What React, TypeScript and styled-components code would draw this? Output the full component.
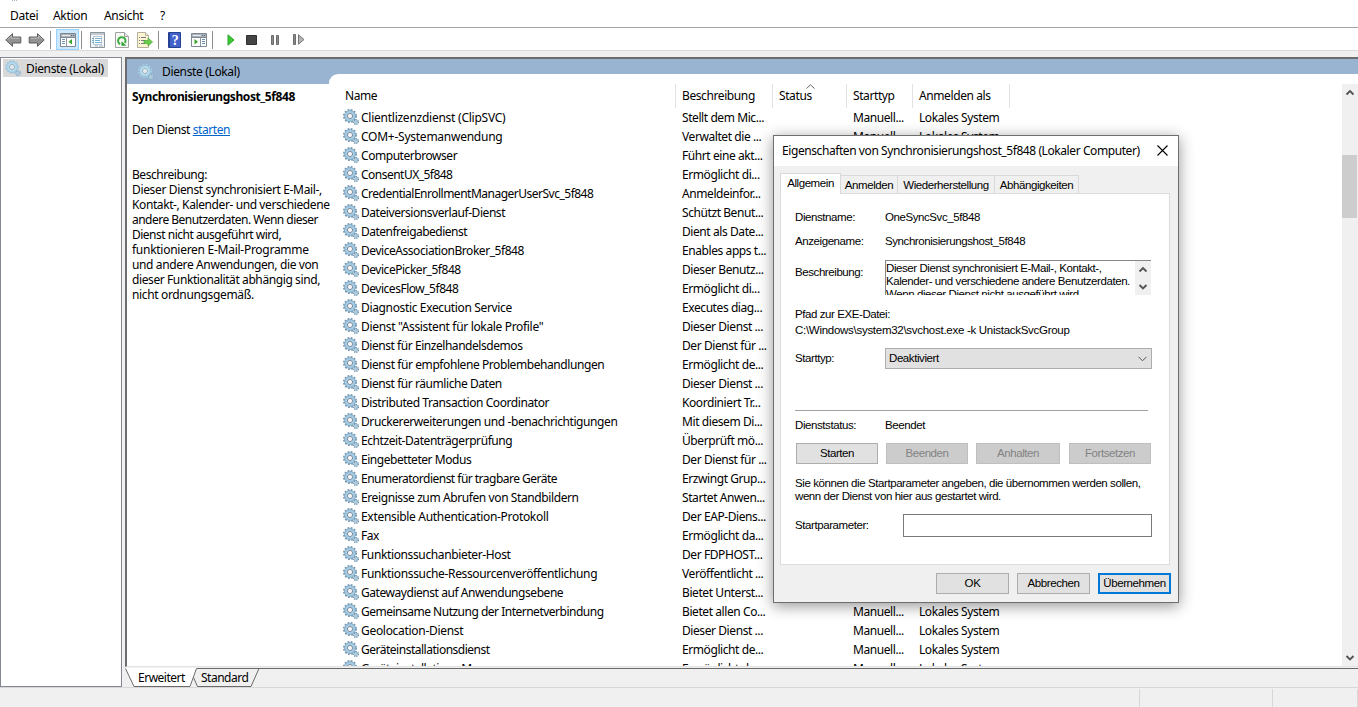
import React from "react";
import styled, { createGlobalStyle, css } from "styled-components";

const Global = createGlobalStyle`
  html, body { margin: 0; padding: 0; }
  body {
    width: 1358px; height: 707px; overflow: hidden; background: #f0f0f0; color: #000;
    font: 12px/15px "Noto Sans", "Open Sans", sans-serif;
  }
  *, *::before, *::after { box-sizing: border-box; }
  button, input { font: inherit; color: inherit; margin: 0; padding: 0; border-radius: 0; outline: 0; }
`;

const Window = styled.div`
  position: relative; width: 1358px; height: 707px; overflow: hidden;
  display: flex; flex-direction: column; background: #f0f0f0; white-space: nowrap;
  letter-spacing: -0.3px;
`;
const Text = styled.span<{ $track: number }>`letter-spacing: ${(p) => p.$track}px;`;
const MenuBar = styled.nav`
  flex: none; height: 28px; padding: 8px 0 0 10px; display: flex; gap: 16px;
  background: #fff; border-bottom: 1px solid #a5a5a8;
`;
const MenuItem = styled.span<{ $w: number }>`width: ${(p) => p.$w}px;`;
const TitleRemnant = styled.svg`position: absolute; left: 12px; top: 0;`;

const ToolBar = styled.div`
  flex: none; height: 23px; padding: 1px 0 0 5px; display: flex; align-items: center;
  background: #fff; border-bottom: 1px solid #dadada;
  svg { display: block; flex: none; }
`;
const Tool = styled.span<{ $ml?: number; $active?: boolean }>`
  flex: none; display: flex; align-items: center; justify-content: center;
  width: ${(p) => (p.$active ? 23 : 17)}px; height: 21px; margin-left: ${(p) => p.$ml ?? 0}px;
  ${(p) => p.$active && css`background: #cce8ff; border: 1px solid #99d1ff;`}
`;
const Rule = styled.i<{ $ml: number }>`
  flex: none; width: 1px; height: 18px; margin-left: ${(p) => p.$ml}px; background: #8d8d8d;
`;

const Body = styled.div`flex: none; height: 636px; display: flex; padding-top: 6px;`;
const Tree = styled.aside`
  flex: none; width: 122px; height: 630px; padding: 1px 2px; background: #fff; border: 1px solid #828790;
`;
const TreeItem = styled.div`
  width: 105px; height: 18px; display: flex; align-items: center; gap: 5px; padding-left: 2px; background: #d9d9d9;
  letter-spacing: -0.35px;
  svg { flex: none; }
`;
const Content = styled.main`flex: 1; margin-left: 3px; display: flex; flex-direction: column;`;
const Pane = styled.section`
  flex: none; height: 610px; display: flex; flex-direction: column; background: #fff;
  border-left: 2px solid #6c6c70; border-top: 2px solid #6c6c6c; border-bottom: 1px solid #e3e3e3;
`;
const Split = styled.div`flex: 1; min-height: 0; display: flex; background: #99b4d1;`;
const Side = styled.div`position: relative; z-index: 1; flex: none; width: 202px; display: flex; flex-direction: column;`;
const SideHead = styled.div`
  height: 25px; display: flex; align-items: center; gap: 8px; padding-left: 11px; letter-spacing: -0.35px;
`;
const SideBody = styled.div`
  flex: 1; padding: 5px 0 0 5px; background: #fff;
`;
const Heading = styled.h1`margin: 0 0 18px; font-size: 12px; line-height: 15px; font-weight: 700; letter-spacing: -0.42px;`;
const ServiceAction = styled.p`margin: 0 0 30px; letter-spacing: -0.42px;`;
const Link = styled.a`color: #0066cc; text-decoration: underline;`;
const Description = styled.div`display: flex; flex-direction: column;`;

const ListArea = styled.div`
  flex: 1; margin-top: 15px; padding-top: 10px; display: flex; background: #fff; border-top-left-radius: 9px; overflow: hidden;
`;
const Table = styled.div`flex: 1; overflow: hidden;`;
const columns = css`display: grid; grid-template-columns: 347px 97px 74px 66px 97px;`;
const HeadRow = styled.div`${columns} height: 24px;`;
const HeadCell = styled.div<{ $pl: number }>`
  position: relative; padding: 4px 0 0 ${(p) => p.$pl}px; border-right: 1px solid #e3e3e3; letter-spacing: -0.4px;
`;
const SortMark = styled.svg`position: absolute; left: 33px; top: 0;`;
const Row = styled.div`${columns} height: 19px;`;
const Cell = styled.div`padding: 2px 0 0 6px; overflow: hidden; letter-spacing: -0.42px;`;
const NameCell = styled.div`
  display: flex; gap: 2px; padding-left: 14px;
  svg { flex: none; margin-top: 1px; }
  span { padding-top: 2px; }
`;

const Scroll = styled.div`
  flex: none; width: 16px; display: flex; flex-direction: column; align-items: center; background: #f0f0f0;
`;
const ScrollStep = styled.svg`display: block;`;
const Track = styled.div`flex: 1; width: 16px; padding-top: 54px;`;
const Thumb = styled.div`width: 15px; height: 63px; background: #cdcdcd;`;

const ViewTabs = styled.div`height: 19px; margin-top: 1px; svg { display: block; }`;
const Status = styled.footer`
  flex: 1; display: grid; grid-template-columns: 1140px 133px 85px; padding-top: 1px; border-top: 1px solid #d7d7d7;
  i { border-right: 1px solid #d7d7d7; }
`;

const Dialog = styled.div`
  position: absolute; z-index: 2; left: 773px; top: 135px; width: 406px; height: 468px; display: flex; flex-direction: column;
  background: #f0f0f0; border: 1px solid #6e6e6e; box-shadow: 0 3px 14px rgba(0, 0, 0, 0.42);
`;
const DialogTitle = styled.div`
  flex: none; height: 30px; display: flex; justify-content: space-between; align-items: center;
  padding: 0 10px 2px 8px; background: #fff; letter-spacing: -0.42px;
`;
const DialogBody = styled.div`
  flex: 1; padding: 7px 7px 8px 6px; display: flex; flex-direction: column;
  font: 11.5px/13px "Liberation Sans", Arial, sans-serif; letter-spacing: -0.42px;
`;
const Tabs = styled.div`position: relative; height: 20px; display: flex; align-items: flex-end;`;
const Tab = styled.div<{ $w: number; $active?: boolean }>`
  width: ${(p) => p.$w}px; height: ${(p) => (p.$active ? 21 : 18)}px; text-align: center;
  padding-top: ${(p) => (p.$active ? 3 : 3)}px; background: ${(p) => (p.$active ? "#fff" : "#f0f0f0")};
  border: 1px solid #d9d9d9; border-bottom: 0; ${(p) => !p.$active && "border-left: 0;"}
  ${(p) => p.$active && "margin-bottom: -1px; z-index: 1;"}
`;
const Sheet = styled.div`
  width: 390px; height: 372px; padding: 17px 17px 0 14px; background: #fff; border: 1px solid #dcdcdc;
  display: flex; flex-direction: column;
`;
const Field = styled.div<{ $h: number; $label?: number }>`
  flex: none; height: ${(p) => p.$h}px; display: grid; grid-template-columns: ${(p) => p.$label ?? 90}px 1fr;
`;
const Label = styled.span<{ $top?: number }>`padding-top: ${(p) => p.$top ?? 0}px;`;
const Memo = styled.div`
  width: 266px; height: 35px; display: flex; overflow: hidden; border-top: 1px solid #868686; border-left: 1px solid #868686;
`;
const MemoText = styled.div`flex: 1; min-width: 0; padding-top: 1px;`;
const MemoScroll = styled.div`
  flex: none; width: 16px; height: 34px; display: flex; flex-direction: column; background: #f0f0f0;
`;
const Path = styled.div`flex: none; height: 41px; margin-top: -1px; margin-bottom: 1px; line-height: 16px;`;
const Select = styled.div`
  width: 267px; height: 21px; display: flex; align-items: center; justify-content: space-between;
  padding: 0 4px 0 3px; background: #e1e1e1; border: 1px solid #adadad;
`;
const Line = styled.div`flex: none; width: 353px; height: 1px; background: #a0a0a0;`;
const Controls = styled.div`
  flex: none; display: grid; grid-template-columns: 82px 82px 84px 82px; column-gap: 8px; margin: 0 0 13px 1px;
  & > :last-child { margin-left: 1px; margin-right: -1px; }
`;
const Button = styled.button<{ $primary?: boolean }>`
  height: 21px; line-height: 19px; letter-spacing: inherit; background: #e1e1e1; border: 1px solid #adadad;
  ${(p) => p.$primary && css`border: 2px solid #0078d7; line-height: 17px;`}
  &:disabled { background: #cccccc; border-color: #bfbfbf; color: #838383; }
`;
const Note = styled.p`flex: none; margin: 0; height: 37px;`;
const Input = styled.input`width: 249px; height: 23px; background: #fff; border: 1px solid #7a7a7a;`;
const Footer = styled.div`
  margin-top: 8px; display: grid; grid-template-columns: repeat(3, 73px); gap: 8px; justify-content: end;
`;

/* name, description, letter spacing of the name */
const services: [string, string, number][] = [
  ["Clientlizenzdienst (ClipSVC)", "Stellt dem Mic...", -0.25],
  ["COM+-Systemanwendung", "Verwaltet die ...", -0.25],
  ["Computerbrowser", "Führt eine akt...", -0.45],
  ["ConsentUX_5f848", "Ermöglicht di...", -0.52],
  ["CredentialEnrollmentManagerUserSvc_5f848", "Anmeldeinfor...", -0.5],
  ["Dateiversionsverlauf-Dienst", "Schützt Benut...", -0.44],
  ["Datenfreigabedienst", "Dient als Date...", -0.51],
  ["DeviceAssociationBroker_5f848", "Enables apps t...", -0.45],
  ["DevicePicker_5f848", "Dieser Benutz...", -0.47],
  ["DevicesFlow_5f848", "Ermöglicht di...", -0.48],
  ["Diagnostic Execution Service", "Executes diag...", -0.35],
  ['Dienst "Assistent für lokale Profile"', "Dieser Dienst ...", -0.33],
  ["Dienst für Einzelhandelsdemos", "Der Dienst für ...", -0.45],
  ["Dienst für empfohlene Problembehandlungen", "Ermöglicht de...", -0.42],
  ["Dienst für räumliche Daten", "Dieser Dienst ...", -0.44],
  ["Distributed Transaction Coordinator", "Koordiniert Tr...", -0.42],
  ["Druckererweiterungen und -benachrichtigungen", "Mit diesem Di...", -0.41],
  ["Echtzeit-Datenträgerprüfung", "Überprüft mö...", -0.43],
  ["Eingebetteter Modus", "Der Dienst für ...", -0.45],
  ["Enumeratordienst für tragbare Geräte", "Erzwingt Grup...", -0.52],
  ["Ereignisse zum Abrufen von Standbildern", "Startet Anwen...", -0.4],
  ["Extensible Authentication-Protokoll", "Der EAP-Diens...", -0.31],
  ["Fax", "Ermöglicht da...", -0.5],
  ["Funktionssuchanbieter-Host", "Der FDPHOST...", -0.37],
  ["Funktionssuche-Ressourcenveröffentlichung", "Veröffentlicht ...", -0.35],
  ["Gatewaydienst auf Anwendungsebene", "Bietet Unterst...", -0.45],
  ["Gemeinsame Nutzung der Internetverbindung", "Bietet allen Co...", -0.5],
  ["Geolocation-Dienst", "Dieser Dienst ...", -0.3],
  ["Geräteinstallationsdienst", "Ermöglicht de...", -0.49],
  ["Geräteinstallations-Manager", "Ermöglicht de...", -0.49],
];

const description: [string, number][] = [
  ["Beschreibung:", -0.45],
  ["Dieser Dienst synchronisiert E-Mail-,", -0.35],
  ["Kontakt-, Kalender- und verschiedene", -0.4],
  ["andere Benutzerdaten. Wenn dieser", -0.52],
  ["Dienst nicht ausgeführt wird,", -0.5],
  ["funktionieren E-Mail-Programme", -0.27],
  ["und andere Anwendungen, die von", -0.38],
  ["dieser Funktionalität abhängig sind,", -0.4],
  ["nicht ordnungsgemäß.", -0.35],
];

const Gears = ({ pale }: { pale?: boolean }) => (
  <svg width="16" height="16" viewBox="0 0 16 16">
    <circle cx="7" cy="7" r="6.1" fill="none" stroke={pale ? "#a9cfe4" : "#6f93ad"} strokeWidth="1.8" strokeDasharray="1.7 1.5" />
    <circle cx="7" cy="7" r="4.3" fill="#f4f8fb" stroke={pale ? "#b4daee" : "#a3cbe4"} strokeWidth="2.8" />
    <circle cx="7" cy="7" r="5.5" fill="none" stroke={pale ? "#8bb4cd" : "#7396b2"} strokeWidth="0.6" />
    <circle cx="7" cy="7" r="2.6" fill={pale ? "#e4e9ee" : "#f7f7f7"} stroke={pale ? "#8fa9bb" : "#6b7f94"} strokeWidth="0.9" />
    <circle cx="13" cy="13" r="2.4" fill="#b7d5e8" stroke={pale ? "#86acc6" : "#6f93ad"} strokeWidth="1.3" strokeDasharray="1.1 0.9" />
    <circle cx="13" cy="13" r="1" fill="#eef5fa" stroke="#7c9db5" strokeWidth="0.5" />
  </svg>
);

const Arrow = ({ right }: { right?: boolean }) => (
  <svg width="17" height="16" viewBox="0 0 17 16">
    <path
      transform={right ? "matrix(-1 0 0 1 17 0)" : undefined}
      d="M.8 8 7.5 1.7V5h8.300v6H7.500v3.300Z" fill="#929292" stroke="#5d5d5d"
    />
    <path transform={right ? "matrix(-1 0 0 1 17 0)" : undefined} d="M2.500 7.500 6.500 4v2.200h8" fill="none" stroke="#bcbcbc" />
  </svg>
);

const WindowIcon = ({ flip }: { flip?: boolean }) => (
  <svg width="16" height="14" viewBox="0 0 16 14">
    <path d="M.5.5h15v13H.5z" fill="#fff" stroke="#7f8790" />
    <path d="M1 1h14v3H1z" fill="#a9b0b8" />
    <path d="M2 2.5h8" stroke="#e9ecef" />
    <path d="M11 2.5h1m1 0h1" stroke="#5d6670" />
    <path d="M1 4.5h14" stroke="#7f8790" />
    {flip ? (
      <>
        <path d="M9.5 5v8" stroke="#8d959d" />
        <path d="M11 6.5h3M11 8.5h3M11 10.5h3" stroke="#6c92b8" />
        <path d="M3.5 6v5.5L7 8.8Z" fill="#35a52b" />
      </>
    ) : (
      <>
        <path d="M6.5 5v8" stroke="#8d959d" />
        <path d="M2 6.5h3M2 8.5h3M2 10.5h3" stroke="#6c92b8" />
        <path d="M12 6v5.5L8.5 8.8Z" fill="#35a52b" />
      </>
    )}
  </svg>
);

const PropertiesIcon = () => (
  <svg width="15" height="16" viewBox="0 0 15 16">
    <path d="M.5.5h14v15H.5z" fill="#f5f7f9" stroke="#8c949c" />
    <path d="M1 1h13v2H1z" fill="#c4cbd2" />
    <path d="M3.500 4.500h8v8h-8z" fill="#fff" stroke="#b4c7d6" />
    <path d="M2 6.500h2m1 0h6M2 8.500h2m1 0h5M2 10.500h2m1 0h6" stroke="#6fb0d6" />
    <path d="M5 14h3m1 0h4" stroke="#a5b0ba" />
  </svg>
);
const RefreshIcon = () => (
  <svg width="14" height="16" viewBox="0 0 14 16">
    <path d="M.5.5h9l4 4v11H.5z" fill="#f8f8f5" stroke="#a2a2a2" />
    <path d="M9.5.5v4h4" fill="#e5e5e5" stroke="#a2a2a2" />
    <path d="M5.200 12.200A3.700 3.700 0 1 1 9.800 11" fill="none" stroke="#3fae41" strokeWidth="2" />
    <path d="M6.500 9.200v4.600h4.800Z" fill="#2b9f31" />
  </svg>
);
const ExportIcon = () => (
  <svg width="16" height="16" viewBox="0 0 16 16">
    <path d="M.5.5h8l3 3v12H.5z" fill="#fcf4d2" stroke="#b5b09a" />
    <path d="M8.500.500v3h3" fill="#eee" stroke="#b5b09a" />
    <path d="M2 5.500h1m1 0h5M2 8.500h1m1 0h4M2 11.500h1m1 0h4" stroke="#777c88" />
    <path d="M7 8.500h4V6l4.500 4-4.500 4v-2.500H7Z" fill="#6ccb4c" stroke="#48a836" strokeWidth=".7" />
  </svg>
);
const HelpIcon = () => (
  <svg width="13" height="16" viewBox="0 0 13 16">
    <path d="M.5.5h12v15H.5z" fill="#4262cb" stroke="#26418f" />
    <path d="M1.500 1v14" stroke="#253f99" />
    <text x="7" y="13" fontFamily="Liberation Serif, serif" fontWeight="700" fontSize="14" fill="#fff" textAnchor="middle">?</text>
  </svg>
);
const Chevron = ({ down, top = 7 }: { down?: boolean; top?: number }) => (
  <ScrollStep width="16" height="17" viewBox="0 0 16 17">
    <path d={down ? `M4.500 ${top}l3.500 3.500 3.500-3.500` : `M4.500 ${top + 3.5}l3.500-3.500 3.500 3.500`} fill="none" stroke="#555" strokeWidth="1.900" />
  </ScrollStep>
);

export default function App() {
  return (
    <>
      <Global />
      <Window>
        <MenuBar>
          <MenuItem $w={27}>Datei</MenuItem>
          <MenuItem $w={35}>Aktion</MenuItem>
          <MenuItem $w={40}>Ansicht</MenuItem>
          <MenuItem $w={8}>?</MenuItem>
        </MenuBar>
        <TitleRemnant width="6" height="1"><path d="M0 .5h5" stroke="#9bb3c4" strokeDasharray="1 1" /></TitleRemnant>
        <ToolBar>
          <Tool><Arrow /></Tool>
          <Tool $ml={6}><Arrow right /></Tool>
          <Rule $ml={5} />
          <Tool $active $ml={5}><WindowIcon /></Tool>
          <Rule $ml={2} />
          <Tool $ml={7}><PropertiesIcon /></Tool>
          <Tool $ml={7}><RefreshIcon /></Tool>
          <Tool $ml={6}><ExportIcon /></Tool>
          <Rule $ml={5} />
          <Tool $ml={7}><HelpIcon /></Tool>
          <Tool $ml={7}><WindowIcon flip /></Tool>
          <Rule $ml={5} />
          <Tool $ml={9}>
            <svg width="8" height="12"><path d="M1 .8v10.400L7 6Z" fill="#3bc936" stroke="#27a62a" /></svg>
          </Tool>
          <Tool $ml={4}>
            <svg width="11" height="10"><path d="M.5.500h10v9h-10z" fill="#454545" stroke="#303030" /></svg>
          </Tool>
          <Tool $ml={6}>
            <svg width="8" height="10"><path d="M.5.500h2v9h-2zM5.500.500h2v9h-2z" fill="#8c8c8c" stroke="#6d6d6d" /></svg>
          </Tool>
          <Tool $ml={7}>
            <svg width="12" height="11"><path d="M.5.500h2v10h-2z" fill="#8c8c8c" stroke="#6d6d6d" /><path d="M5.500.800v9.400l5.500-4.700Z" fill="#b5b5b5" stroke="#777" /></svg>
          </Tool>
        </ToolBar>
        <Body>
          <Tree>
            <TreeItem><Gears pale />Dienste (Lokal)</TreeItem>
          </Tree>
          <Content>
            <Pane>
              <Split>
                <Side>
                  <SideHead><Gears pale />Dienste (Lokal)</SideHead>
                  <SideBody>
                    <Heading>Synchronisierungshost_5f848</Heading>
                    <ServiceAction>Den Dienst <Link>starten</Link></ServiceAction>
                    <Description>
                      {description.map(([line, track]) => <Text key={line} $track={track}>{line}</Text>)}
                    </Description>
                  </SideBody>
                </Side>
                <ListArea>
                  <Table>
                    <HeadRow>
                      <HeadCell $pl={16}>Name</HeadCell>
                      <HeadCell $pl={6}>Beschreibung</HeadCell>
                      <HeadCell $pl={6}>
                        Status
                        <SortMark width="9" height="5"><path d="M.5 4.500 4.500.800l4 3.700" fill="none" stroke="#666" /></SortMark>
                      </HeadCell>
                      <HeadCell $pl={6}>Starttyp</HeadCell>
                      <HeadCell $pl={6}>Anmelden als</HeadCell>
                    </HeadRow>
                    {services.map(([name, text, track]) => (
                      <Row key={name}>
                        <NameCell><Gears /><Text $track={track}>{name}</Text></NameCell>
                        <Cell>{text}</Cell>
                        <Cell />
                        <Cell>Manuell...</Cell>
                        <Cell>Lokales System</Cell>
                      </Row>
                    ))}
                  </Table>
                  <Scroll>
                    <Chevron />
                    <Track><Thumb /></Track>
                    <Chevron down />
                  </Scroll>
                </ListArea>
              </Split>
            </Pane>
            <ViewTabs>
              <svg width="1233" height="19">
                <path d="M0 0h72l-6 18.500H9Z" fill="#fff" />
                <path d="M.5.500 9 18.500h56L71.500.500H1233" fill="none" stroke="#696969" />
                <path d="m68.500 9.500 4 9h53.500l8-18" fill="none" stroke="#696969" />
                <text x="13" y="14" fontSize="12" letterSpacing="-.5">Erweitert</text>
                <text x="76" y="14" fontSize="12" letterSpacing="-.5">Standard</text>
              </svg>
            </ViewTabs>
          </Content>
        </Body>
        <Status><i /><i /><i /></Status>

        <Dialog>
          <DialogTitle>
            <span>Eigenschaften von Synchronisierungshost_5f848 (Lokaler Computer)</span>
            <svg width="11" height="11"><path d="m.5.500 10 10m0-10-10 10" stroke="#000" strokeWidth="1.100" /></svg>
          </DialogTitle>
          <DialogBody>
            <Tabs>
              <Tab $w={61} $active>Allgemein</Tab>
              <Tab $w={57}>Anmelden</Tab>
              <Tab $w={97}>Wiederherstellung</Tab>
              <Tab $w={84}>Abhängigkeiten</Tab>
            </Tabs>
            <Sheet>
              <Field $h={24}><Label>Dienstname:</Label><span>OneSyncSvc_5f848</span></Field>
              <Field $h={25}><Label>Anzeigename:</Label><span>Synchronisierungshost_5f848</span></Field>
              <Field $h={47}>
                <Label $top={6}>Beschreibung:</Label>
                <Memo>
                  <MemoText>
                    Dieser Dienst synchronisiert E-Mail-, Kontakt-,<br />
                    Kalender- und verschiedene andere Benutzerdaten.<br />
                    Wenn dieser Dienst nicht ausgeführt wird,
                  </MemoText>
                  <MemoScroll><Chevron /><Chevron down /></MemoScroll>
                </Memo>
              </Field>
              <Path>Pfad zur EXE-Datei:<br /><Text $track={-0.28}>C:\Windows\system32\svchost.exe -k UnistackSvcGroup</Text></Path>
              <Field $h={62}>
                <Label $top={4}>Starttyp:</Label>
                <Select>
                  Deaktiviert
                  <svg width="9" height="6"><path d="m.5.800 4 4 4-4" fill="none" stroke="#555" /></svg>
                </Select>
              </Field>
              <Line />
              <Field $h={32}><Label $top={8}>Dienststatus:</Label><Label $top={8}>Beendet</Label></Field>
              <Controls>
                <Button>Starten</Button>
                <Button disabled>Beenden</Button>
                <Button disabled>Anhalten</Button>
                <Button disabled>Fortsetzen</Button>
              </Controls>
              <Note>
                Sie können die Startparameter angeben, die übernommen werden sollen,<br />
                wenn der Dienst von hier aus gestartet wird.
              </Note>
              <Field $h={23} $label={108}><Label $top={5}>Startparameter:</Label><Input /></Field>
            </Sheet>
            <Footer>
              <Button>OK</Button>
              <Button>Abbrechen</Button>
              <Button $primary>Übernehmen</Button>
            </Footer>
          </DialogBody>
        </Dialog>
      </Window>
    </>
  );
}
